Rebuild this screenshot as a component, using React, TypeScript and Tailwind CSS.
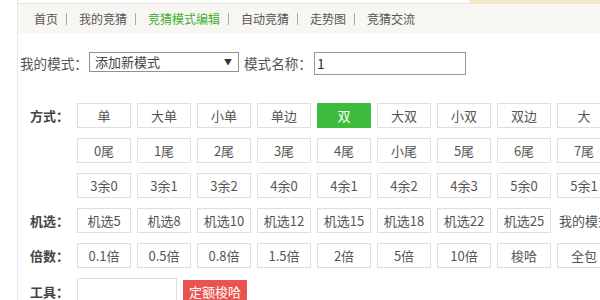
import React from "react";

const font = { fontFamily: '"Noto Sans CJK SC", "Noto Sans", sans-serif' };

const navItems = ["首页", "我的竞猜", "竞猜模式编辑", "自动竞猜", "走势图", "竞猜交流"];

function Btn({ children, active }: { children: React.ReactNode; active?: boolean }) {
  return (
    <div
      className={
        active
          ? "flex h-[25px] w-[54px] shrink-0 items-center justify-center border border-[#3dbb3d] bg-[#3dbb3d] text-[13px] text-white"
          : "flex h-[25px] w-[54px] shrink-0 items-center justify-center border border-[#dedede] bg-white text-[13px] text-[#555]"
      }
    >
      {children}
    </div>
  );
}

function Row({ label, items, active, extra }: { label?: string; items: string[]; active?: string; extra?: React.ReactNode }) {
  return (
    <div className="flex items-center">
      <div className="w-[47px] shrink-0 text-[13px] font-bold leading-[25px] text-[#444]">{label}</div>
      <div className="flex gap-[6px]">
        {items.map((t) => (
          <Btn key={t} active={t === active}>
            {t}
          </Btn>
        ))}
        {extra}
      </div>
    </div>
  );
}

export default function App() {
  return (
    <div className="flex h-[300px] w-[600px] overflow-hidden bg-white" style={font}>
      <div className="w-[17px] shrink-0" />
      <div className="min-w-0 flex-1 border-l border-[#e8e8e8]">
        <div className="flex h-[3px]">
          <div className="flex-1" />
          <div className="w-[131px] bg-[#f7e8c4]" />
        </div>
        <nav className="flex h-[30px] items-center border-t border-[#e4e4e4] bg-[#f7f6f2] pl-[16px] text-[12px] text-[#555]">
          {navItems.map((t, i) => (
            <React.Fragment key={t}>
              <span className={t === "竞猜模式编辑" ? "text-[#3fae2f]" : ""}>{t}</span>
              {i < navItems.length - 1 && (
                <span className="ml-[8px] mr-[12px] inline-block h-[12px] w-[1px] bg-[#aaa]" />
              )}
            </React.Fragment>
          ))}
        </nav>

        <div className="mt-[19px] flex items-start pl-[2px] text-[13.6px] leading-[23px] text-[#555]">
          <span>我的模式：</span>
          <div className="relative ml-[1px] flex h-[20px] w-[150px] items-center border border-[#909090] pl-[5px] text-[13px] leading-[18px] text-[#444]">
            添加新模式
            <span className="absolute right-[6px] top-[4px] text-[8px] leading-[10px] text-[#333]">▼</span>
          </div>
          <span className="ml-[5px]">模式名称：</span>
          <div className="ml-[2px] flex h-[23px] w-[152px] items-center border border-[#999] pl-[2px] text-[14px] text-[#333]">1</div>
        </div>

        <div className="mt-[28px] flex flex-col gap-[10px] pl-[12px]">
          <Row label="方式：" items={["单", "大单", "小单", "单边", "双", "大双", "小双", "双边", "大"]} active="双" />
          <Row items={["0尾", "1尾", "2尾", "3尾", "4尾", "小尾", "5尾", "6尾", "7尾"]} />
          <Row items={["3余0", "3余1", "3余2", "4余0", "4余1", "4余2", "4余3", "5余0", "5余1"]} />
          <Row
            label="机选："
            items={["机选5", "机选8", "机选10", "机选12", "机选15", "机选18", "机选22", "机选25"]}
            extra={<span className="ml-[2px] whitespace-nowrap text-[13px] leading-[25px] text-[#555]">我的模式</span>}
          />
          <Row label="倍数：" items={["0.1倍", "0.5倍", "0.8倍", "1.5倍", "2倍", "5倍", "10倍", "梭哈", "全包"]} />
          <div className="flex items-start">
            <div className="w-[47px] shrink-0 pt-[1px] text-[13px] font-bold leading-[25px] text-[#444]">工具：</div>
            <div className="h-[25px] w-[100px] shrink-0 border border-[#dedede]" />
            <div className="ml-[6px] mt-[2px] flex h-[24px] w-[64px] items-center justify-center bg-[#ea5450] text-[13px] text-white">定额梭哈</div>
          </div>
        </div>
      </div>
    </div>
  );
}
